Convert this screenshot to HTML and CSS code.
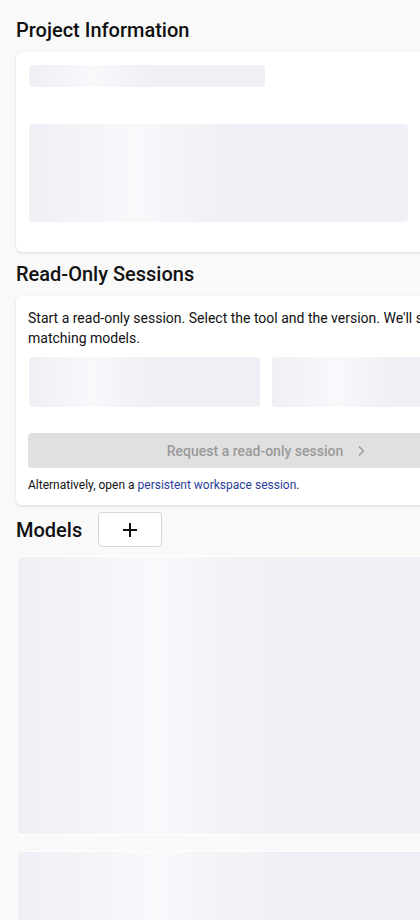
FILE: index.html
```html
<!DOCTYPE html>
<html lang="en">
<head>
<meta charset="utf-8">
<title>Project</title>
<link rel="stylesheet" href="styles.css">
</head>
<body>
<main class="page">
  <h2 class="section-title">Project Information</h2>
  <section class="card info-card">
    <div class="skeleton sk-line"></div>
    <div class="skeleton sk-block"></div>
  </section>

  <h2 class="section-title">Read-Only Sessions</h2>
  <section class="card session-card">
    <p class="session-text">Start a read-only session. Select the tool and the version. We'll show you the matching models.</p>
    <div class="selects">
      <div class="skeleton sk-select"></div>
      <div class="skeleton sk-select"></div>
    </div>
    <button class="request-btn" disabled>
      <span>Request a read-only session</span>
      <svg class="chev" width="8" height="12" viewBox="0 0 8 12" aria-hidden="true"><path d="M2 1.5 L6.5 6 L2 10.5" fill="none" stroke="currentColor" stroke-width="1.4"/></svg>
    </button>
    <p class="alt-text">Alternatively, open a <a href="#" class="link">persistent workspace session</a>.</p>
  </section>

  <div class="models-head">
    <h2 class="section-title models-title">Models</h2>
    <button class="add-btn" aria-label="Add model">
      <svg width="18" height="18" viewBox="0 0 18 18" aria-hidden="true"><path d="M9 2 V16 M2 9 H16" fill="none" stroke="#111" stroke-width="2"/></svg>
    </button>
  </div>
  <div class="models">
    <div class="skeleton sk-model"></div>
    <div class="skeleton sk-model"></div>
  </div>
</main>
</body>
</html>
```
FILE: styles.css
```css
html, body {
  margin: 0;
  padding: 0;
  background: #f9f9f9;
  font-family: Roboto, "Liberation Sans", Arial, sans-serif;
  color: #111;
}

.page {
  width: 498px;
  padding: 18px 0 0 16px;
}

.section-title {
  margin: 0 0 10px 0;
  font-size: 20px;
  line-height: 24px;
  font-weight: 500;
  color: #111;
}

.card {
  background: #fff;
  border-radius: 6px;
  box-shadow: 0 1px 3px rgba(0, 0, 0, 0.13);
  margin-bottom: 10px;
}

.skeleton {
  border-radius: 4px;
  background: linear-gradient(90deg, #eff0f5 0%, #f3f4f8 14%, #f8f9fb 28%, #f2f3f7 42%, #eff0f5 56%, #eff0f5 100%);
}

.info-card {
  padding: 13px 13px 30px 13px;
}

.sk-line {
  width: 236px;
  height: 22px;
}

.sk-block {
  width: 379px;
  height: 98px;
  margin-top: 37px;
}

.session-card {
  padding: 12px;
  margin-bottom: 7px;
}

.session-text {
  margin: 0;
  font-size: 14px;
  line-height: 20px;
  color: #111;
}

.selects {
  display: grid;
  grid-template-columns: 1fr 1fr;
  gap: 12px;
  margin: 9px 0 0 1px;
}

.sk-select {
  height: 50px;
}

.request-btn {
  display: flex;
  align-items: center;
  justify-content: center;
  gap: 14px;
  width: 100%;
  height: 35px;
  margin-top: 26px;
  border: none;
  border-radius: 4px;
  background: #e0e0e0;
  color: #9a9a9a;
  font-family: inherit;
  font-size: 14px;
  font-weight: 500;
  padding: 0 0 0 2px;
}

.chev {
  color: #9a9a9a;
}

.alt-text {
  margin: 9px 0 0 0;
  font-size: 12px;
  line-height: 16px;
  color: #111;
}

.link {
  color: #2a3f98;
  text-decoration: none;
}

.models-head {
  display: flex;
  align-items: center;
  gap: 16px;
}

.models-title {
  margin: 0;
}

.add-btn {
  display: flex;
  align-items: center;
  justify-content: center;
  width: 64px;
  height: 35px;
  padding: 0;
  background: #fff;
  border: 1px solid #d6d6d6;
  border-radius: 4px;
}

.models {
  display: flex;
  flex-direction: column;
  gap: 16px;
  margin-top: 9px;
}

.sk-model {
  box-sizing: border-box;
  height: 279px;
  margin-left: 1px;
  border: 1px solid #fff;
}
```
